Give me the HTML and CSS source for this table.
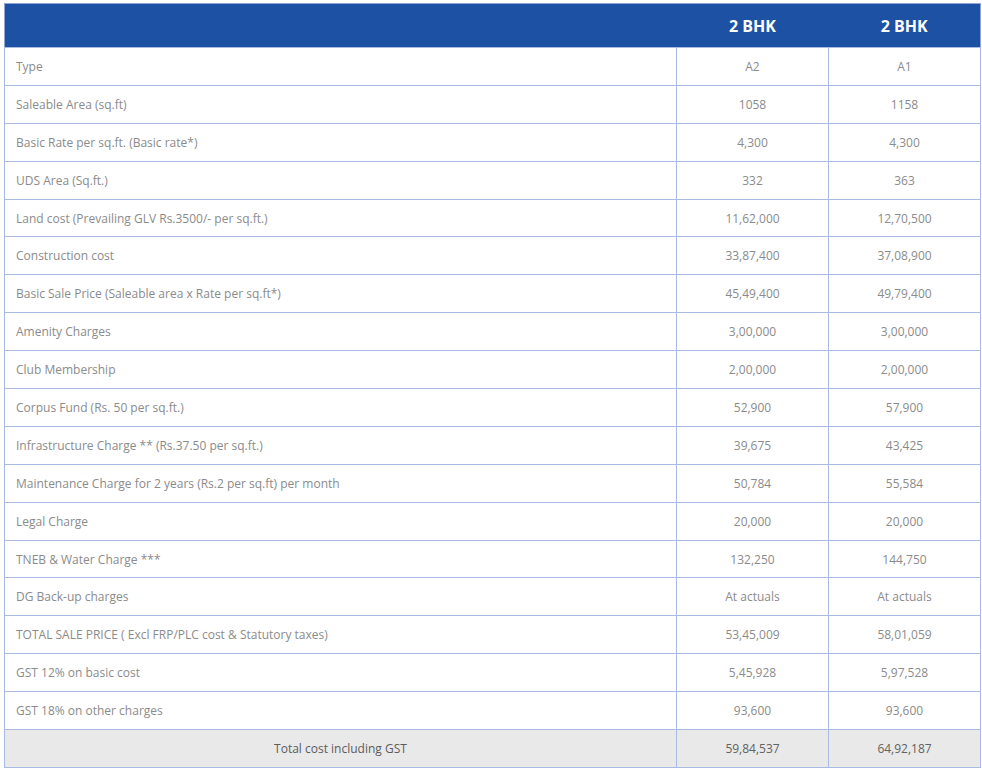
FILE: index.html
```html
<!DOCTYPE html>
<html lang="en">
<head>
<meta charset="utf-8">
<title>Price table</title>
<link rel="stylesheet" href="styles.css">
</head>
<body>
<table class="price-table">
  <colgroup>
    <col class="col-label">
    <col class="col-val">
    <col class="col-val">
  </colgroup>
  <thead>
    <tr>
      <th class="head-blank"></th>
      <th>2 BHK</th>
      <th>2 BHK</th>
    </tr>
  </thead>
  <tbody>
    <tr><td>Type</td><td>A2</td><td>A1</td></tr>
    <tr><td>Saleable Area (sq.ft)</td><td>1058</td><td>1158</td></tr>
    <tr><td>Basic Rate per sq.ft. (Basic rate*)</td><td>4,300</td><td>4,300</td></tr>
    <tr><td>UDS Area (Sq.ft.)</td><td>332</td><td>363</td></tr>
    <tr><td>Land cost (Prevailing GLV Rs.3500/- per sq.ft.)</td><td>11,62,000</td><td>12,70,500</td></tr>
    <tr><td>Construction cost</td><td>33,87,400</td><td>37,08,900</td></tr>
    <tr><td>Basic Sale Price (Saleable area x Rate per sq.ft*)</td><td>45,49,400</td><td>49,79,400</td></tr>
    <tr><td>Amenity Charges</td><td>3,00,000</td><td>3,00,000</td></tr>
    <tr><td>Club Membership</td><td>2,00,000</td><td>2,00,000</td></tr>
    <tr><td>Corpus Fund (Rs. 50 per sq.ft.)</td><td>52,900</td><td>57,900</td></tr>
    <tr><td>Infrastructure Charge ** (Rs.37.50 per sq.ft.)</td><td>39,675</td><td>43,425</td></tr>
    <tr><td>Maintenance Charge for 2 years (Rs.2 per sq.ft) per month</td><td>50,784</td><td>55,584</td></tr>
    <tr><td>Legal Charge</td><td>20,000</td><td>20,000</td></tr>
    <tr><td>TNEB &amp; Water Charge ***</td><td>132,250</td><td>144,750</td></tr>
    <tr><td>DG Back-up charges</td><td>At actuals</td><td>At actuals</td></tr>
    <tr><td>TOTAL SALE PRICE ( Excl FRP/PLC cost &amp; Statutory taxes)</td><td>53,45,009</td><td>58,01,059</td></tr>
    <tr><td>GST 12% on basic cost</td><td>5,45,928</td><td>5,97,528</td></tr>
    <tr><td>GST 18% on other charges</td><td>93,600</td><td>93,600</td></tr>
    <tr class="total-row"><td>Total cost including GST</td><td>59,84,537</td><td>64,92,187</td></tr>
  </tbody>
</table>
</body>
</html>
```
FILE: styles.css
```css
html, body {
  margin: 0;
  padding: 0;
  background: #ffffff;
}

body {
  padding: 3px 2px 0 4px;
  font-family: "Open Sans", "Noto Sans", "Liberation Sans", sans-serif;
}

.price-table {
  width: 976px;
  border-collapse: collapse;
  table-layout: fixed;
  border: 1px solid #8fa6d6;
}

.col-label { width: 672px; }
.col-val { width: 152px; }

.price-table th {
  background: #1c51a4;
  color: #ffffff;
  font-weight: 700;
  font-size: 16px;
  height: 43px;
  padding: 0;
  text-align: center;
  border: none;
  letter-spacing: 0;
}

.price-table td {
  height: 36.9px;
  padding: 0 0 0 11px;
  font-size: 12px;
  color: #8b8b8b;
  border: 1px solid #a9bbe3;
  vertical-align: middle;
}

.price-table td + td {
  padding: 0;
  text-align: center;
  border-left: 1px solid #8ea4d6;
}

.total-row td {
  background: #e9e9e9;
  color: #5c5c5c;
  text-align: center;
  padding: 0;
}

.total-row td + td {
  color: #626262;
}
```
